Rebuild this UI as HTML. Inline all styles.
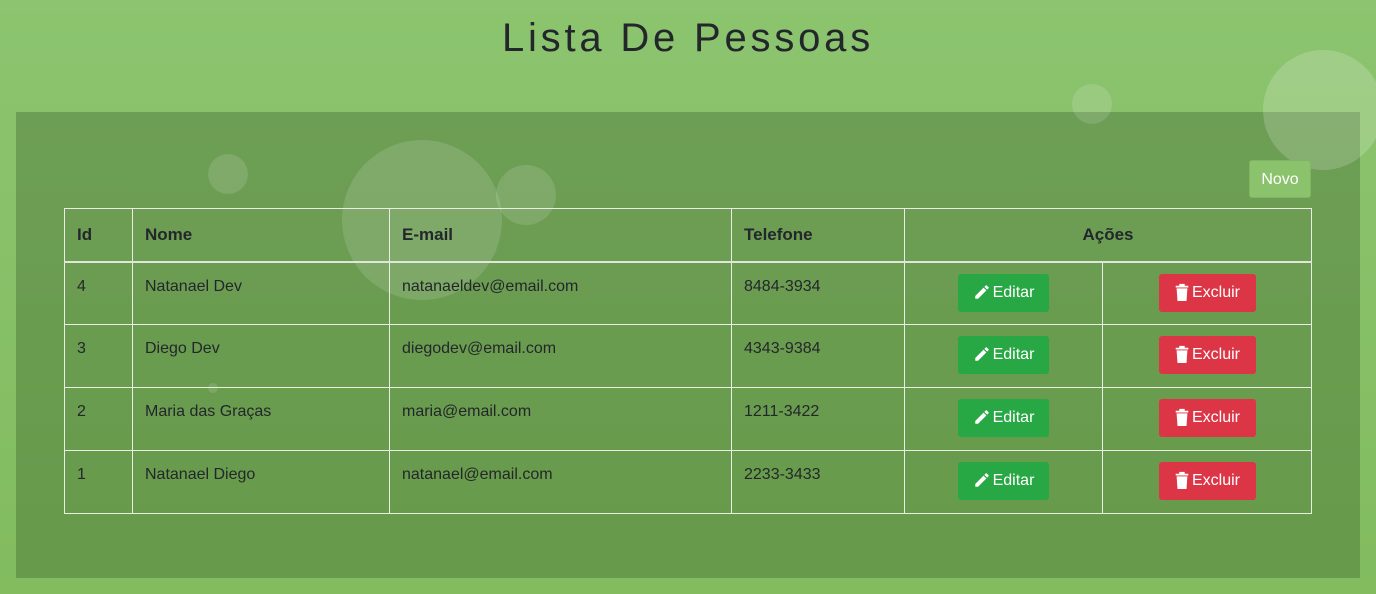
<!DOCTYPE html>
<html><head><meta charset="utf-8"><style>
*{box-sizing:border-box;margin:0;padding:0}
body{width:1376px;height:594px;overflow:hidden;background:linear-gradient(#8cc46f,#82bc5f);font-family:"Liberation Sans",sans-serif;position:relative}
h1{position:absolute;top:16px;left:0;width:1376px;text-align:center;font-weight:400;font-size:40px;letter-spacing:3.8px;color:#23272b}
.panel{position:absolute;left:16px;top:112px;width:1344px;height:466px;background:linear-gradient(#6d9e55,#679a4a)}
.b{position:absolute;border-radius:50%;background:rgba(255,255,255,.13)}
table{position:absolute;left:64px;top:208px;border-collapse:collapse;width:1248px;color:#23272b;font-size:16px}
td,th{border:1px solid #e8eee4;padding:0 12px;text-align:left;vertical-align:top}
th{height:53px;vertical-align:middle;font-weight:700;font-size:17px;border-bottom:2px solid #e0e6dc}
td{height:63px;padding-top:15px}
td.c{text-align:center;padding-top:11px}
.btn{display:inline-block;height:38px;line-height:38px;color:#fff;border-radius:3px;font-size:16px;padding:0 12px}
.e{background:#28a745;width:91px}.x{background:#dc3545;width:97px}
.btn svg{vertical-align:-4px;margin-right:2px}
.novo{position:absolute;left:1249px;top:160px;width:62px;height:38px;line-height:38px;text-align:center;background:#8bc26c;border:1px solid #7fb565;color:#fff;border-radius:3px;font-size:16px}
</style></head><body>
<h1>Lista De Pessoas</h1>
<div class="panel"></div>
<div class="b" style="left:1072px;top:84px;width:40px;height:40px"></div>
<div class="b" style="left:1263px;top:50px;width:120px;height:120px;background:rgba(255,255,255,.18)"></div>
<div class="b" style="left:208px;top:154px;width:40px;height:40px"></div>
<div class="b" style="left:342px;top:140px;width:160px;height:160px"></div>
<div class="b" style="left:496px;top:165px;width:60px;height:60px"></div>
<div class="b" style="left:208px;top:383px;width:10px;height:10px"></div>
<div class="novo">Novo</div>
<table>
<tr><th style="width:68px">Id</th><th style="width:257px">Nome</th><th style="width:342px">E-mail</th><th style="width:173px">Telefone</th><th colspan="2" style="text-align:center">Ações</th></tr>
<tr><td>4</td><td>Natanael Dev</td><td>natanaeldev@email.com</td><td>8484-3934</td><td class="c" style="width:198px">EDIT</td><td class="c">DEL</td></tr>
<tr><td>3</td><td>Diego Dev</td><td>diegodev@email.com</td><td>4343-9384</td><td class="c">EDIT</td><td class="c">DEL</td></tr>
<tr><td>2</td><td>Maria das Graças</td><td>maria@email.com</td><td>1211-3422</td><td class="c">EDIT</td><td class="c">DEL</td></tr>
<tr><td>1</td><td>Natanael Diego</td><td>natanael@email.com</td><td>2233-3433</td><td class="c">EDIT</td><td class="c">DEL</td></tr>
</table>
<script>
document.querySelectorAll('td.c').forEach(function(t){
if(t.textContent=='EDIT')t.innerHTML='<span class="btn e"><svg width="18" height="18" viewBox="0 0 24 24"><path fill="#fff" d="M3 17.25V21h3.75L17.81 9.94l-3.75-3.75L3 17.25zM20.71 7.04a1 1 0 0 0 0-1.41l-2.34-2.34a1 1 0 0 0-1.41 0l-1.83 1.83 3.75 3.75 1.83-1.83z"/></svg>Editar</span>';
else t.innerHTML='<span class="btn x"><svg width="16" height="18" viewBox="0 0 16 20"><path fill="#fff" d="M1 3h14v2H1zM5 1h6v2H5zM2 6h12l-1 14H3z"/></svg>Excluir</span>';
});
</script>
</body></html>
